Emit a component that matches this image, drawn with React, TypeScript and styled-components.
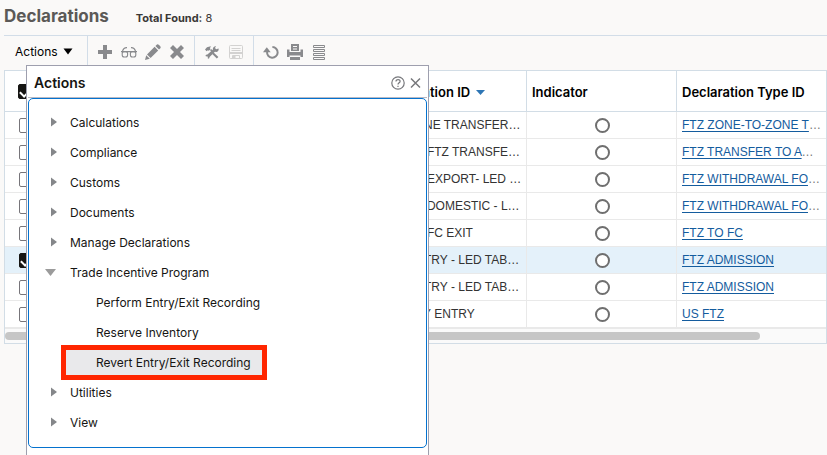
import React from "react";
import styled, { createGlobalStyle, css } from "styled-components";

const GlobalStyle = createGlobalStyle`
  * { box-sizing: border-box; }
  body { margin: 0; background: #faf9f8; font-family: Inter, "Liberation Sans", sans-serif; color: #161513; }
  button { font: inherit; color: inherit; background: none; border: 0; padding: 0; cursor: pointer; }
`;

const Page = styled.main`
  position: relative;
  min-height: 100vh;
  overflow: hidden;
  padding-left: 4px;
`;

const PageHeader = styled.header`
  display: flex;
  align-items: baseline;
  gap: 27px;
  height: 35px;
`;

const PageTitle = styled.h1`
  margin: 0;
  font-size: 17px;
  line-height: 32px;
  font-weight: 700;
  color: #5b5957;
`;

const Total = styled.p`
  margin: 0;
  font-size: 11px;
  line-height: 16px;
  color: #3a3836;
  b { font-weight: 700; }
`;

const Toolbar = styled.div`
  display: flex;
  height: 35px;
  border-top: 1px solid #d2dde8;
`;

const ToolGroup = styled.div<{ $last?: boolean }>`
  display: flex;
  align-items: center;
  height: 32px;
  padding: 0 5px;
  border-right: ${(p) => (p.$last ? "0" : "1px solid #d2dde8")};
`;

const ToolButton = styled.button`
  display: grid;
  place-items: center;
  width: 24px;
  height: 24px;
  color: #898a8d;
  &:disabled { color: #d3d2d1; }
`;

const ActionsButton = styled.button`
  display: flex;
  align-items: center;
  gap: 5px;
  height: 32px;
  width: 84px;
  padding: 0 0 2px 11px;
  border-right: 1px solid #d2dde8;
  font-size: 12px;
  color: #000;
`;

const GridFrame = styled.section`
  border: 1px solid #d2dde6;
  background: #fff;
`;

const Grid = styled.table`
  width: 100%;
  table-layout: fixed;
  border-collapse: separate;
  border-spacing: 0;
  font-family: "Liberation Sans", Arial, sans-serif;
  font-size: 12px;
  line-height: 16px;
`;

const Col = styled.col<{ $w?: number }>`
  width: ${(p) => (p.$w ? `${p.$w}px` : "auto")};
`;

const HeadCell = styled.th`
  height: 41px;
  padding: 2px 4px 0 5px;
  border-bottom: 1px solid #d2dde6;
  border-right: 1px solid #d2dde6;
  &:last-child { border-right: 0; }
  text-align: left;
  vertical-align: middle;
  white-space: nowrap;
  font-family: Inter, sans-serif;
  font-size: 13px;
  font-weight: 600;
  color: #000;
`;

const HeadLabel = styled.span`
  display: flex;
  align-items: center;
  gap: 6px;
`;

const Row = styled.tr<{ $selected?: boolean }>`
  background: ${(p) => (p.$selected ? "#e4f1fa" : "#fff")};
`;

const Cell = styled.td<{ $link?: boolean }>`
  height: 27px;
  padding: 0 4px 0 5px;
  border-bottom: 1px solid #e9e9e9;
  border-right: 1px solid #e9e9e9;
  &:last-child { border-right: 0; }
  overflow: hidden;
  white-space: nowrap;
  text-overflow: ellipsis;
  color: ${(p) => (p.$link ? "#777" : "#333")};
`;

const PickCell = styled(Cell)`
  padding: 0 0 0 14px;
`;
const PickHead = styled(HeadCell)`
  padding: 0 0 0 13px;
`;

const GridLink = styled.a`
  color: #145c9e;
  text-decoration: underline;
  text-underline-offset: 2px;
`;

const Check = styled.input`
  appearance: none;
  display: grid;
  place-items: center;
  width: 15px;
  height: 15px;
  margin: 0;
  border: 1px solid #77757a;
  border-radius: 2px;
  background: #fff;
  &:checked {
    border-color: #161513;
    background: #161513;
  }
  &:checked::after {
    content: "";
    width: 9px;
    height: 5px;
    border: solid #fff;
    border-width: 0 0 2px 2px;
    transform: rotate(-45deg);
  }
`;

const Dot = styled.span`
  display: block;
  width: 15px;
  height: 15px;
  margin: 0 auto;
  border: 2px solid #6f6f6f;
  border-radius: 50%;
  background: #fff;
`;

const ScrollTrack = styled.div`
  height: 15px;
  padding-top: 3px;
  border-top: 1px solid #e9e9e9;
  background: #fafafa;
`;

const ScrollThumb = styled.div`
  width: 92%;
  height: 8px;
  border-radius: 4px;
  background: #c6c6c6;
`;

const Dialog = styled.div`
  position: absolute;
  top: 65px;
  left: 26px;
  width: 403px;
  padding: 0 1px 16px;
  border: 1px solid #9e9fae;
  background: #fff;
`;

const DialogBar = styled.header`
  display: flex;
  align-items: center;
  gap: 4px;
  height: 32px;
  padding: 2px 5px 0 6px;
  border-bottom: 1px solid #b9bac4;
`;

const DialogTitle = styled.h2`
  flex: 1;
  margin: 0;
  font-size: 14px;
  line-height: 20px;
  font-weight: 600;
`;

const IconButton = styled.button`
  display: grid;
  place-items: center;
  height: 16px;
  color: #77787c;
`;

const Tree = styled.ul`
  margin: 0;
  padding: 8px 0 10px;
  list-style: none;
  border: 1px solid #0572ce;
  border-radius: 5px;
`;

const SubTree = styled.ul`
  margin: 0;
  padding: 0;
  list-style: none;
`;

const TreeButton = styled.button`
  display: flex;
  align-items: center;
  width: 100%;
  height: 30px;
  padding-left: 16px;
  font-size: 12px;
  text-align: left;
  svg { margin-right: 9px; }
`;

const LeafButton = styled.button<{ $marked?: boolean }>`
  position: relative;
  display: block;
  height: 30px;
  margin-left: 33px;
  padding: 0 15px 0 34px;
  font-size: 12px;
  text-align: left;
  ${(p) =>
    p.$marked &&
    css`
      background: #e9e9eb;
      &::after {
        content: "";
        position: absolute;
        inset: -2px -1px -3px;
        border: 5px solid #ff2600;
      }
    `}
`;

const Svg = ({ children, size = 16 }: { children: React.ReactNode; size?: number }) => (
  <svg width={size} height={size} viewBox="0 0 16 16" fill="currentColor" aria-hidden="true">
    {children}
  </svg>
);

const PlusIcon = () => <Svg><path d="M6 1h4v5h5v4h-5v5H6v-5H1V6h5z" /></Svg>;
const GlassesIcon = () => (
  <Svg>
    <g fill="none" stroke="currentColor" strokeWidth="1.1">
      <rect x="1.2" y="7.6" width="5.4" height="5.4" rx="2" />
      <rect x="9.4" y="7.6" width="5.4" height="5.4" rx="2" />
      <path d="M0 7.6h16M1.4 7.4Q2.6 3.4 6 3.6M14.6 7.4Q13.4 3.4 10 3.6" />
    </g>
  </Svg>
);
const PencilIcon = () => (
  <Svg><path d="M0 16 1.2 11.2 4.8 14.8zM2 10.4 9.6 2.8 13.2 6.4 5.6 14zM10.4 2 12 .4Q13 0 14 .9L15.1 2Q16 3 15.6 4L14 5.6z" /></Svg>
);
const CrossIcon = () => (
  <Svg><path d="M4 1 8 5 12 1 15 4 11 8 15 12 12 15 8 11 4 15 1 12 5 8 1 4z" /></Svg>
);
const ToolsIcon = () => (
  <Svg>
    <path d="M1 5.4Q3 1.8 7.2 2.6L5.8 4l.8 1.2-1.8 1.6-1-.6-1.2 1zM9.6 8.6l4.8 4.4-1.6 1.6-4.6-4.6z" />
    <path d="M12 2 11 4l1.2 1.2 2.4-.8q.4 2.8-2 3.6L10.9 7.8 5.6 12.9q0 1.6-1.4 1.8L3.6 14l.4-1-1-.8-1 .2-.5-.8q.3-1.2 1.9-1.2L8.8 5.7Q8.6 2.6 12 2z" />
    <path d="M6.6 5.6 8.2 7.2" stroke="currentColor" strokeWidth="1.6" />
  </Svg>
);
const SaveIcon = () => (
  <Svg>
    <g fill="none" stroke="currentColor">
      <rect x="1.5" y="1.5" width="13" height="13" rx="1" />
      <path d="M3.5 4.5h9M3.5 6.5h9M4.5 14.5v-3h7v3" />
      <path d="M1 9h14" strokeWidth="2" />
      <path d="M5 13h2.5" strokeWidth="2" />
    </g>
  </Svg>
);
const RefreshIcon = () => (
  <Svg>
    <path d="M4.1 7.8A5.3 5.3 0 1 0 9.4 3.1" fill="none" stroke="currentColor" strokeWidth="2" />
    <path d="M0 8.2 3.8 3.2 7.7 8.2z" />
  </Svg>
);
const PrintIcon = () => (
  <Svg>
    <path d="M4 0h8v7H4zM0 5.5h2.5V8h11V5.5H16V13h-2.5v-1.5h-11V13H0z" />
    <path d="M3 13h10v3H3z" />
    <path d="M6 2.5h4M6 5h4M3 12.5h10" stroke="#faf9f8" strokeWidth="1" />
  </Svg>
);
const ListIcon = () => (
  <Svg>
    <g fill="none" stroke="currentColor">
      <path d="M2.5 1.5h11v2h-11zM2.5 5.5h11v2h-11zM2.5 9.5h11v2h-11zM2.5 13.5h11v2h-11z" />
    </g>
  </Svg>
);
const DownTriangle = () => (
  <svg width="10" height="7" viewBox="0 0 10 7" aria-hidden="true"><path d="M.5.5h9L5 6.5z" fill="#000" /></svg>
);
const SortIcon = () => (
  <svg width="9" height="5" viewBox="0 0 9 5" aria-hidden="true"><path d="M0 0h9L4.5 5z" fill="#2e76b5" /></svg>
);
const HelpIcon = () => (
  <svg width="14" height="14" viewBox="0 0 14 14" fill="none" stroke="currentColor" strokeWidth="1.2" aria-hidden="true">
    <circle cx="7" cy="7" r="6.2" />
    <path d="M5 5.6C5 2.8 9.2 3 9.1 5.4 9 6.9 7 6.8 7 8.6M7 9.7v1.3" />
  </svg>
);
const CloseIcon = () => (
  <svg width="13" height="14" viewBox="0 0 13 14" stroke="currentColor" strokeWidth="1.5" aria-hidden="true">
    <path d="m2 2.5 9 9M11 2.5l-9 9" />
  </svg>
);
const TreeArrow = ({ open }: { open?: boolean }) => (
  <svg width="16" height="10" viewBox="0 0 16 10" fill={open ? "#9b9b9b" : "#85878a"} aria-hidden="true">
    <path d={open ? "M0 2h11L5.5 9z" : "M6 .5v9l6-4.5z"} />
  </svg>
);

const rows = [
  { id: "FTZ ZONE TRANSFER - LED", type: "FTZ ZONE-TO-ZONE TRANSFER" },
  { id: "FTZ TO FTZ TRANSFER - LED", type: "FTZ TRANSFER TO AWAY ZONE" },
  { id: "FTZ TO EXPORT- LED TABLE", type: "FTZ WITHDRAWAL FOR EXPORT" },
  { id: "FTZ TO DOMESTIC - LED", type: "FTZ WITHDRAWAL FOR DOMESTIC" },
  { id: "FTZ TO FC EXIT", type: "FTZ TO FC" },
  { id: "FTZ ENTRY - LED TABLETS", type: "FTZ ADMISSION", selected: true },
  { id: "FTZ ENTRY - LED TABLETS", type: "FTZ ADMISSION" },
  { id: "WEEKLY ENTRY", type: "US FTZ" },
];

const menu: { label: string; items?: string[] }[] = [
  { label: "Calculations" },
  { label: "Compliance" },
  { label: "Customs" },
  { label: "Documents" },
  { label: "Manage Declarations" },
  {
    label: "Trade Incentive Program",
    items: ["Perform Entry/Exit Recording", "Reserve Inventory", "Revert Entry/Exit Recording"],
  },
  { label: "Utilities" },
  { label: "View" },
];

export default function App() {
  return (
    <Page>
      <GlobalStyle />
      <PageHeader>
        <PageTitle>Declarations</PageTitle>
        <Total><b>Total Found:</b> 8</Total>
      </PageHeader>
      <Toolbar role="toolbar">
        <ActionsButton aria-haspopup="dialog">Actions <DownTriangle /></ActionsButton>
        <ToolGroup>
          <ToolButton aria-label="New"><PlusIcon /></ToolButton>
          <ToolButton aria-label="View"><GlassesIcon /></ToolButton>
          <ToolButton aria-label="Edit"><PencilIcon /></ToolButton>
          <ToolButton aria-label="Delete"><CrossIcon /></ToolButton>
        </ToolGroup>
        <ToolGroup>
          <ToolButton aria-label="Tools"><ToolsIcon /></ToolButton>
          <ToolButton aria-label="Save" disabled><SaveIcon /></ToolButton>
        </ToolGroup>
        <ToolGroup $last>
          <ToolButton aria-label="Refresh"><RefreshIcon /></ToolButton>
          <ToolButton aria-label="Print"><PrintIcon /></ToolButton>
          <ToolButton aria-label="Columns"><ListIcon /></ToolButton>
        </ToolGroup>
      </Toolbar>

      <GridFrame>
        <Grid>
          <colgroup>
            <Col $w={372} />
            <Col $w={150} />
            <Col $w={150} />
            <Col />
          </colgroup>
          <thead>
            <tr>
              <PickHead><Check type="checkbox" aria-label="Select all" defaultChecked /></PickHead>
              <HeadCell><HeadLabel>Declaration ID <SortIcon /></HeadLabel></HeadCell>
              <HeadCell>Indicator</HeadCell>
              <HeadCell>Declaration Type ID</HeadCell>
            </tr>
          </thead>
          <tbody>
            {rows.map((row, i) => (
              <Row key={i} $selected={row.selected}>
                <PickCell>
                  <Check type="checkbox" aria-label={`Select ${row.id}`} defaultChecked={row.selected} />
                </PickCell>
                <Cell>{row.id}</Cell>
                <Cell><Dot /></Cell>
                <Cell $link><GridLink href="#">{row.type}</GridLink></Cell>
              </Row>
            ))}
          </tbody>
        </Grid>
        <ScrollTrack><ScrollThumb /></ScrollTrack>
      </GridFrame>

      <Dialog role="dialog" aria-labelledby="actions-title">
        <DialogBar>
          <DialogTitle id="actions-title">Actions</DialogTitle>
          <IconButton aria-label="Help"><HelpIcon /></IconButton>
          <IconButton aria-label="Close"><CloseIcon /></IconButton>
        </DialogBar>
        <Tree>
          {menu.map((node) => (
            <li key={node.label}>
              <TreeButton aria-expanded={!!node.items}>
                <TreeArrow open={!!node.items} />
                {node.label}
              </TreeButton>
              {node.items && (
                <SubTree>
                  {node.items.map((item) => (
                    <li key={item}>
                      <LeafButton $marked={item.startsWith("Revert")}>{item}</LeafButton>
                    </li>
                  ))}
                </SubTree>
              )}
            </li>
          ))}
        </Tree>
      </Dialog>
    </Page>
  );
}
